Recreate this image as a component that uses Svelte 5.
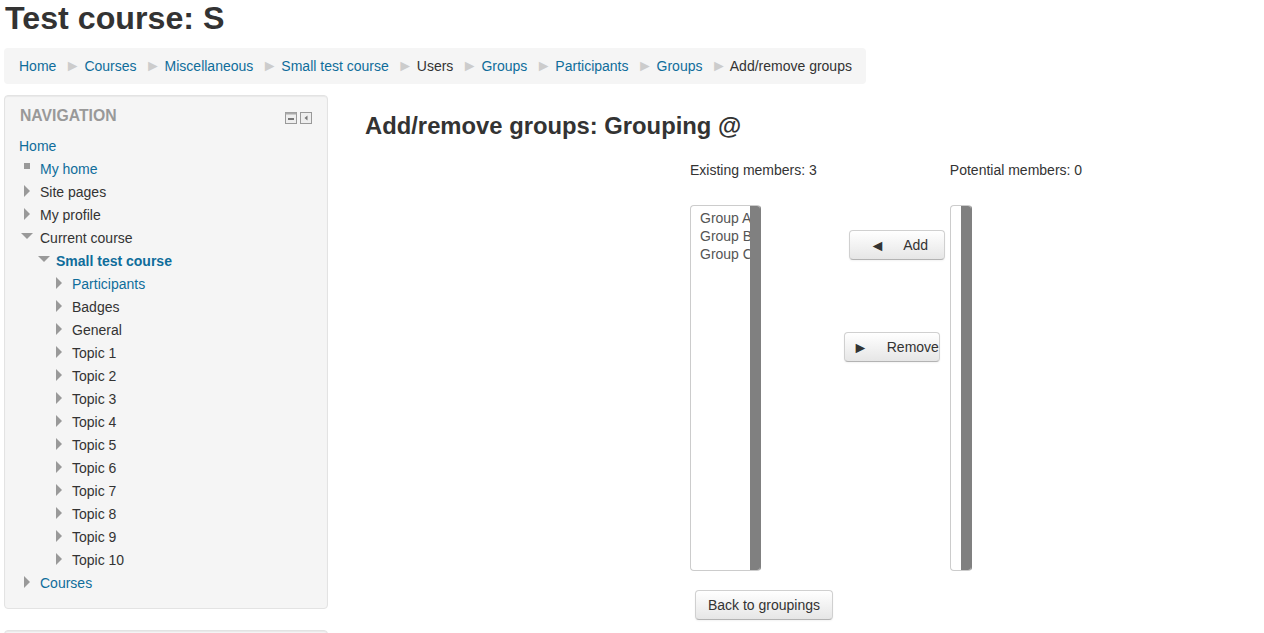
<script>
	const crumbs = [
		{ label: "Home", link: true },
		{ label: "Courses", link: true },
		{ label: "Miscellaneous", link: true },
		{ label: "Small test course", link: true },
		{ label: "Users", link: false },
		{ label: "Groups", link: true },
		{ label: "Participants", link: true },
		{ label: "Groups", link: true },
		{ label: "Add/remove groups", link: false },
	];

	const topics = ["Badges", "General"];
	for (let i = 1; i <= 10; i++) topics.push("Topic " + i);
</script>

<div class="page">
	<h1>Test course: S</h1>

	<nav class="breadcrumb">
		{#each crumbs as crumb, i}
			{#if i > 0}<span class="sep">►</span>{/if}
			<span class:link={crumb.link}>{crumb.label}</span>
		{/each}
	</nav>

	<div class="columns">
		<aside>
			<section class="block">
				<header>
					<h2>Navigation</h2>
					<div class="block-icons">
						<svg width="12" height="12" viewBox="0 0 12 12">
							<rect x="0.5" y="0.5" width="11" height="11" fill="#eee" stroke="#999" />
							<rect x="0.5" y="0.5" width="11" height="2" fill="#aaa" />
							<rect x="3" y="6" width="6" height="2" fill="#777" />
						</svg>
						<svg width="12" height="12" viewBox="0 0 12 12">
							<rect x="0.5" y="0.5" width="11" height="11" fill="#eee" stroke="#999" />
							<path d="M7.5 3.5 4.5 6l3 2.5z" fill="#777" />
						</svg>
					</div>
				</header>
				<ul class="tree">
					<li class="root link">Home</li>
					<li class="lvl1 link"><span class="square"></span>My home</li>
					<li class="lvl1"><span class="tri"></span>Site pages</li>
					<li class="lvl1"><span class="tri"></span>My profile</li>
					<li class="lvl1"><span class="tri down"></span>Current course</li>
					<li class="lvl2 link strong"><span class="tri down"></span>Small test course</li>
					<li class="lvl3 link"><span class="tri"></span>Participants</li>
					{#each topics as topic}
						<li class="lvl3"><span class="tri"></span>{topic}</li>
					{/each}
					<li class="lvl1 link"><span class="tri"></span>Courses</li>
				</ul>
			</section>
			<section class="block empty"></section>
		</aside>

		<main>
			<h3>Add/remove groups: Grouping @</h3>
			<div class="members">
				<div class="member-col first">
					<label for="existing">Existing members: 3</label>
					<div class="listbox wide" id="existing">
						<div class="options">
							<div>Group A</div>
							<div>Group B</div>
							<div>Group C</div>
						</div>
						<div class="scrollbar"></div>
					</div>
				</div>
				<div class="actions">
					<button class="add"><span class="arrow">◄</span>Add</button>
					<button class="remove"><span class="arrow">►</span>Remove</button>
				</div>
				<div class="member-col">
					<label for="potential">Potential members: 0</label>
					<div class="listbox narrow" id="potential">
						<div class="options"></div>
						<div class="scrollbar"></div>
					</div>
				</div>
			</div>
			<button class="back">Back to groupings</button>
		</main>
	</div>
</div>

<style>
	:global(body) {
		overflow: hidden;
		background: #fff;
	}

	.page {
		height: 633px;
		overflow: hidden;
		padding: 0 4px;
		box-sizing: border-box;
		font-family: "Liberation Sans", Arial, sans-serif;
		font-size: 14px;
		line-height: 23px;
		color: #333;
	}

	h1 {
		margin: 0 0 11px 1px;
		font-size: 32.2px;
		line-height: 37px;
		font-weight: bold;
	}

	.breadcrumb {
		box-sizing: border-box;
		width: 862px;
		height: 36px;
		padding: 7px 15px;
		background: #f5f5f5;
		border-radius: 4px;
		white-space: nowrap;
	}

	.sep {
		margin: 0 -0.2px 0 8.5px;
		color: #ccc;
		font-size: 16px;
		line-height: 20px;
	}

	.link {
		color: #0f6d9b;
	}

	.columns {
		display: flex;
		margin-top: 11px;
	}

	aside {
		width: 324px;
		flex: none;
	}

	.block {
		box-sizing: border-box;
		height: 514px;
		padding: 8px 15px 8px 14px;
		background: #f5f5f5;
		border: 1px solid #e3e3e3;
		border-radius: 4px;
		box-shadow: inset 0 1px 1px rgba(0, 0, 0, 0.05);
	}

	.block.empty {
		margin-top: 21px;
		height: 60px;
	}

	.block header {
		display: flex;
		justify-content: space-between;
		align-items: center;
		height: 24px;
		margin-bottom: 7px;
	}

	h2 {
		margin: -2px 0 0 1px;
		font-size: 15.75px;
		font-weight: bold;
		text-transform: uppercase;
		color: #999;
	}

	.block-icons {
		display: flex;
		gap: 3px;
		margin-top: 3px;
	}

	.block-icons svg {
		display: block;
	}

	.tree {
		margin: 0;
		padding: 0;
		list-style: none;
	}

	.tree li {
		position: relative;
		height: 23px;
		white-space: nowrap;
	}

	.lvl1 {
		padding-left: 21px;
	}

	.lvl2 {
		padding-left: 37px;
	}

	.lvl3 {
		padding-left: 53px;
	}

	.strong {
		font-weight: bold;
	}

	.tri,
	.square {
		position: absolute;
		display: block;
	}

	.lvl1 .tri,
	.lvl1 .square {
		left: 5px;
	}

	.lvl2 .tri {
		left: 22px;
	}

	.lvl3 .tri {
		left: 37px;
	}

	.tri {
		top: 4px;
		width: 0;
		height: 0;
		border-style: solid;
		border-width: 6.5px 0 6.5px 6px;
		border-color: transparent transparent transparent #999;
	}

	.tri.down {
		top: 6px;
		margin-left: -3px;
		border-width: 6px 6px 0 6px;
		border-color: #999 transparent transparent transparent;
	}

	.square {
		top: 5px;
		width: 6px;
		height: 6px;
		background: #999;
	}

	main {
		flex: 1;
		min-width: 0;
		padding-left: 37px;
	}

	h3 {
		margin: 11px 0 0;
		font-size: 23.8px;
		line-height: 40px;
		font-weight: bold;
	}

	.members {
		display: flex;
		margin: 15px 0 0 325px;
	}

	.member-col {
		flex: none;
	}

	.member-col label {
		display: block;
		white-space: nowrap;
		line-height: 18px;
		margin-bottom: 26px;
	}

	.listbox {
		box-sizing: border-box;
		display: flex;
		height: 366px;
		background: #fff;
		border: 1px solid #ccc;
		border-right-color: #808080;
		border-radius: 4px;
		overflow: hidden;
	}

	.listbox.wide {
		width: 71px;
	}

	.listbox.narrow {
		width: 22px;
	}

	.options {
		flex: 1;
		min-width: 0;
		overflow: hidden;
		padding: 3px 0 0 9px;
		font-size: 14px;
		line-height: 18px;
		color: #555;
		white-space: nowrap;
	}

	.scrollbar {
		flex: none;
		width: 10px;
		background: #808080;
	}

	.actions {
		box-sizing: border-box;
		width: 133px;
		flex: none;
		display: flex;
		flex-direction: column;
		align-items: flex-start;
		padding-top: 69px;
	}

	button {
		box-sizing: border-box;
		flex: none;
		height: 30px;
		padding: 0;
		font: inherit;
		font-size: 14px;
		color: #333;
		background: linear-gradient(#fff, #e6e6e6);
		border: 1px solid #d0d0d0;
		border-bottom-color: #b3b3b3;
		border-radius: 4px;
		box-shadow: inset 0 1px 0 rgba(255, 255, 255, 0.2), 0 1px 2px rgba(0, 0, 0, 0.05);
		white-space: nowrap;
	}

	.add,
	.remove {
		display: flex;
		align-items: center;
		width: 96px;
	}

	.arrow {
		font-size: 16px;
	}

	.add {
		margin-left: 32px;
		padding-left: 19.7px;
	}

	.add .arrow {
		margin-right: 17.9px;
	}

	.remove {
		margin-left: 27px;
		margin-top: 72px;
		padding-left: 7.7px;
	}

	.remove .arrow {
		margin-right: 18.4px;
	}

	.back {
		display: block;
		width: 138px;
		margin: 19px 0 0 330px;
	}
</style>
